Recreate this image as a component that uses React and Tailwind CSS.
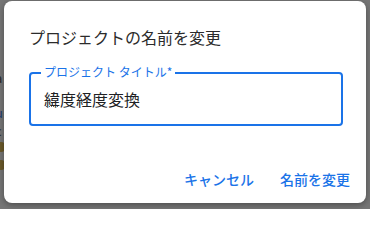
import React from "react";

export default function App() {
  const font = { fontFamily: '"Noto Sans CJK JP", "Noto Sans", sans-serif' };
  return (
    <div
      className="relative w-[370px] h-[209px] overflow-hidden bg-[#767676]"
      style={font}
    >
      {/* underlying page peeking at the left edge */}
      <div className="absolute left-[-5px] top-0 flex flex-col text-[13px] leading-none text-[#2a2a2a]">
        <span className="mt-[52px] h-[13px]">l</span>
        <span className="mt-[6px] h-[13px]">a</span>
        <span className="mt-[22px] h-[13px] text-[#1f3d6e]">u</span>
        <span className="mt-[5px] h-[13px]">c</span>
        <span className="mt-[5px] ml-[2px] w-[8px] h-[10px] rounded-full bg-[#6b5a2a]"></span>
        <span className="mt-[8px] ml-[2px] w-[8px] h-[10px] rounded-full bg-[#6b5a2a]"></span>
      </div>

      <div className="absolute left-[4px] top-[1px] w-[362px] h-[202px] rounded-[8px] bg-white shadow-[0_2px_6px_rgba(0,0,0,0.35)] flex flex-col pl-[25px] pr-[16px] pt-[24px]">
        <h2 className="text-[16px] leading-[24px] text-[#2b2b2b] font-normal">
          プロジェクトの名前を変更
        </h2>

        <div className="relative mt-[23px] w-[314px] h-[54px] rounded-[4px] border-2 border-[#1a73e8] flex items-center pl-[13px]">
          <span className="absolute left-[10px] top-[-9px] bg-white px-[3px] text-[12px] leading-[14px] font-normal text-[#1a73e8]">
            プロジェクト タイトル*
          </span>
          <div className="relative">
            <span className="text-[16px] leading-[22px] text-[#202124]">緯度経度変換</span>
            <span className="absolute left-[2px] top-[19px] w-[12px] border-b border-dotted border-[#5f6368]"></span>
          </div>
        </div>

        <div className="mt-auto mb-[14px] flex justify-end gap-[26px]">
          <button className="text-[14px] leading-[20px] font-medium text-[#1a73e8]">キャンセル</button>
          <button className="text-[14px] leading-[20px] font-medium text-[#1a73e8]">名前を変更</button>
        </div>
      </div>
    </div>
  );
}
